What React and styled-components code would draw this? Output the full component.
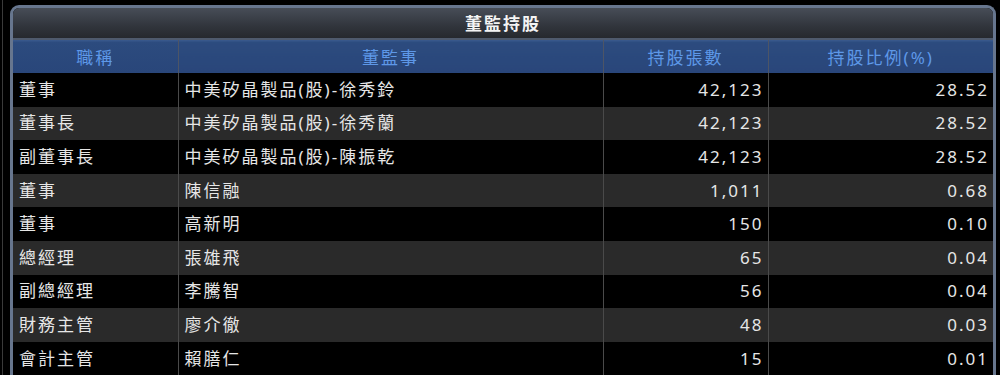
import styled, { createGlobalStyle } from "styled-components"

const GlobalStyle = createGlobalStyle`
html, body {
    margin: 0;
    padding: 0;
    background: #000;
}
body {
    font-family: "Noto Sans", "Noto Sans CJK TC", sans-serif;
}
`

const rows = [
    { title: "董事", name: "中美矽晶製品(股)-徐秀鈴", shares: "42,123", ratio: "28.52" },
    { title: "董事長", name: "中美矽晶製品(股)-徐秀蘭", shares: "42,123", ratio: "28.52" },
    { title: "副董事長", name: "中美矽晶製品(股)-陳振乾", shares: "42,123", ratio: "28.52" },
    { title: "董事", name: "陳信融", shares: "1,011", ratio: "0.68" },
    { title: "董事", name: "高新明", shares: "150", ratio: "0.10" },
    { title: "總經理", name: "張雄飛", shares: "65", ratio: "0.04" },
    { title: "副總經理", name: "李騰智", shares: "56", ratio: "0.04" },
    { title: "財務主管", name: "廖介徹", shares: "48", ratio: "0.03" },
    { title: "會計主管", name: "賴膳仁", shares: "15", ratio: "0.01" },
]

const App = () => {
    return (
        <Page>
            <GlobalStyle />
            <Panel>
                <TitleBar>董監持股</TitleBar>
                <Table>
                    <colgroup>
                        <col style={{ width: 165 }} />
                        <col style={{ width: 425 }} />
                        <col style={{ width: 165 }} />
                        <col />
                    </colgroup>
                    <thead>
                        <tr>
                            <HeadCell>職稱</HeadCell>
                            <HeadCell>董監事</HeadCell>
                            <HeadCell>持股張數</HeadCell>
                            <HeadCell>持股比例(%)</HeadCell>
                        </tr>
                    </thead>
                    <tbody>
                        {rows.map((row, key) => (
                            <Row key={key} $alt={key % 2 === 1}>
                                <Cell>{row.title}</Cell>
                                <Cell>{row.name}</Cell>
                                <Cell $num>{row.shares}</Cell>
                                <Cell $num>{row.ratio}</Cell>
                            </Row>
                        ))}
                    </tbody>
                </Table>
            </Panel>
        </Page>
    )
}

const Page = styled.div`
box-sizing: border-box;
width: 998px;
height: 375px;
margin-left: 2px;
padding: 5px 4px 0 7px;
overflow: hidden;
border-left: 1px solid #3a3a3a;
`

const Panel = styled.div`
border: 3px solid #67768e;
border-bottom: none;
border-radius: 9px 9px 0 0;
background: #000;
overflow: hidden;
`

const TitleBar = styled.div`
height: 30px;
line-height: 30px;
text-align: center;
font-family: "Noto Sans CJK TC", sans-serif;
font-size: 17px;
font-weight: bold;
color: #f4f4f4;
letter-spacing: 2px;
background: linear-gradient(to bottom, #474d57 0%, #31353c 60%, #26292e 100%);
border-bottom: 2px solid #4f5a6c;
`

const Table = styled.table`
width: 100%;
border-collapse: collapse;
table-layout: fixed;
font-family: "Noto Sans", "Noto Sans CJK TC", sans-serif;
`

const HeadCell = styled.th`
height: 33px;
padding: 0 0 1px;
box-sizing: border-box;
font-family: "Noto Sans", "Noto Sans CJK TC", sans-serif;
font-size: 17px;
font-weight: normal;
letter-spacing: 2px;
color: #5e98e8;
background: linear-gradient(to bottom, #3a5a8e 0%, #2c4b7e 8%, #29467a 100%);
border-left: 1px solid #4d5566;

&:first-child {
    border-left: none;
}
`

const Row = styled.tr`
height: 33.6px;
background: ${(p) => (p.$alt ? "#2a2a2a" : "#000")};
`

const Cell = styled.td`
padding: 0 4px 0 6px;
font-size: 17px;
line-height: 20px;
letter-spacing: 2px;
color: #e6e6e6;
white-space: nowrap;
text-align: ${(p) => (p.$num ? "right" : "left")};
border-left: 1px solid #4a4a4a;

&:first-child {
    border-left: none;
}
`

export default App
